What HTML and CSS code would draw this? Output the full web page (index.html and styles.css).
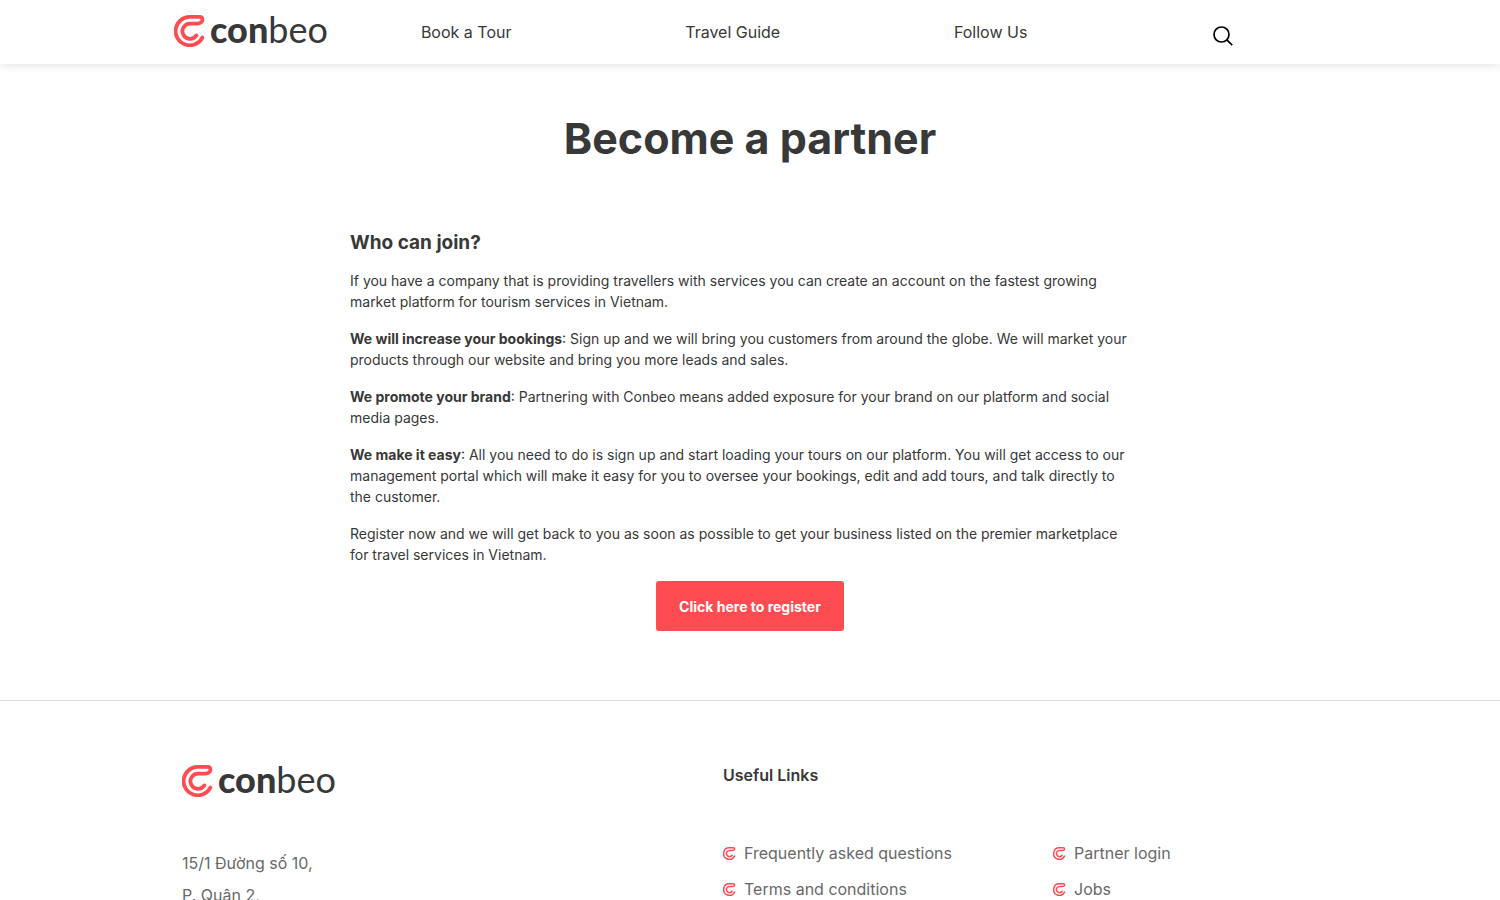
FILE: index.html
```html
<!DOCTYPE html>
<html lang="en">

<head>
    <meta charset="UTF-8">
    <meta name="viewport" content="width=device-width, initial-scale=1.0">
    <title>Become a partner - Conbeo</title>
    <link rel="stylesheet" href="styles.css">
</head>

<body>
    <!-- Logo mark shared by header, footer and link bullets -->
    <svg class="sprite" aria-hidden="true">
        <symbol id="mark" viewBox="0 0 32 32">
            <path d="M28.4 22.6A14.2 14.2 0 1 1 16 1.9H25.6C29.2 1.9 29 6 27 7.4C25.8 8.4 24.8 8.6 23.6 8.6H16.5A7.6 7.6 0 1 0 22.4 20.4" fill="none" stroke="#ff4b52" stroke-width="3.8" stroke-linecap="round" stroke-linejoin="round"/>
        </symbol>
    </svg>

    <header class="site-header">
        <div class="header-inner">
            <a href="#" class="logo">
                <svg class="logo-mark" aria-hidden="true"><use href="#mark"/></svg>
                <span class="logo-text"><b>con</b>beo</span>
            </a>
            <nav class="main-nav">
                <a href="#">Book a Tour</a>
                <a href="#">Travel Guide</a>
                <a href="#">Follow Us</a>
                <button type="button" class="search-btn" aria-label="Search">
                    <svg width="20" height="20" viewBox="0 0 20 20" fill="none" stroke="#000" stroke-width="1.7" aria-hidden="true">
                        <circle cx="8.5" cy="8.5" r="7.5"/>
                        <path d="M13.8 13.8L19.2 19.2"/>
                    </svg>
                </button>
            </nav>
        </div>
    </header>

    <main class="page">
        <h1>Become a partner</h1>
        <h2>Who can join?</h2>
        <p>If you have a company that is providing travellers with services you can create an account on the fastest growing market platform for tourism services in Vietnam.</p>
        <p><b>We will increase your bookings</b>: Sign up and we will bring you customers from around the globe. We will market your products through our website and bring you more leads and sales.</p>
        <p><b>We promote your brand</b>: Partnering with Conbeo means added exposure for your brand on our platform and social media pages.</p>
        <p><b>We make it easy</b>: All you need to do is sign up and start loading your tours on our platform. You will get access to our management portal which will make it easy for you to oversee your bookings, edit and add tours, and talk directly to the customer.</p>
        <p>Register now and we will get back to you as soon as possible to get your business listed on the premier marketplace for travel services in Vietnam.</p>
        <button type="button" class="register-btn">Click here to register</button>
    </main>

    <footer class="site-footer">
        <div class="footer-inner">
            <div class="footer-about">
                <a href="#" class="logo">
                    <svg class="logo-mark" aria-hidden="true"><use href="#mark"/></svg>
                    <span class="logo-text"><b>con</b>beo</span>
                </a>
                <address lang="vi">15/1 Đường số 10,<br>P. Quận 2,</address>
            </div>
            <div class="footer-links">
                <h3>Useful Links</h3>
                <ul>
                    <li><a href="#"><svg class="bullet" aria-hidden="true"><use href="#mark"/></svg>Frequently asked questions</a></li>
                    <li><a href="#"><svg class="bullet" aria-hidden="true"><use href="#mark"/></svg>Partner login</a></li>
                    <li><a href="#"><svg class="bullet" aria-hidden="true"><use href="#mark"/></svg>Terms and conditions</a></li>
                    <li><a href="#"><svg class="bullet" aria-hidden="true"><use href="#mark"/></svg>Jobs</a></li>
                </ul>
            </div>
        </div>
    </footer>
</body>

</html>
```
FILE: styles.css
```css
* {
    box-sizing: border-box;
}

body {
    margin: 0;
    font-family: Inter, sans-serif;
    font-size: 14px;
    line-height: 21px;
    color: #383838;
    background-color: #fff;
}

a {
    color: inherit;
    text-decoration: none;
}

.sprite {
    display: block;
    width: 0;
    height: 0;
}

/* Header */
.site-header {
    background-color: #fff;
    box-shadow: 0 0 10px rgba(0, 0, 0, 0.15);
}

.header-inner {
    display: flex;
    align-items: center;
    max-width: 1170px;
    height: 64px;
    margin: 0 auto;
    padding: 0 3px 0 9px;
}

.logo {
    display: flex;
    align-items: center;
    gap: 4px;
    height: 32px;
    color: #383838;
}

.header-inner .logo {
    width: 160px;
    margin-bottom: 2px;
}

.logo-mark {
    width: 32px;
    height: 32px;
}

.logo-text {
    padding-bottom: 4px;
    font-family: Lato, sans-serif;
    font-size: 36px;
    font-weight: 400;
    line-height: 32px;
}

.logo-text b {
    font-weight: 900;
}

.main-nav {
    flex: 1;
    display: flex;
    justify-content: space-around;
    align-items: center;
    font-size: 16px;
}

.search-btn {
    display: flex;
    padding: 8px 12px 0;
    border: none;
    background: none;
    cursor: pointer;
}

/* Content */
.page {
    max-width: 832px;
    margin: 0 auto;
    padding: 47px 16px 69px;
}

h1 {
    margin: 0 0 66px;
    font-size: 43px;
    font-weight: 700;
    line-height: 54px;
    text-align: center;
}

h2 {
    margin: 0 0 15px;
    font-size: 19px;
    font-weight: 700;
    line-height: 24px;
}

p {
    margin: 0 0 16px;
    padding-right: 14px;
}

.register-btn {
    display: block;
    margin: 0 auto;
    padding: 0 23px;
    height: 50px;
    border: none;
    border-radius: 3px;
    background-color: #ff4b52;
    color: #fff;
    font-family: inherit;
    font-size: 14px;
    font-weight: 700;
    cursor: pointer;
}

/* Footer */
.site-footer {
    border-top: 1px solid #ddd;
}

.footer-inner {
    display: grid;
    grid-template-columns: 541px 1fr;
    max-width: 1200px;
    margin: 0 auto;
    padding: 64px 32px 0;
    font-size: 16px;
    color: #696969;
}

address {
    margin-top: 50px;
    font-style: normal;
    line-height: 32px;
}

h3 {
    margin: 0 0 50px;
    font-size: 16px;
    font-weight: 600;
    line-height: 20px;
    color: #383838;
}

ul {
    display: grid;
    grid-template-columns: 330px 1fr;
    margin: 0;
    padding: 0;
    list-style: none;
}

li a {
    display: flex;
    align-items: center;
    gap: 8px;
    line-height: 36px;
}

.bullet {
    width: 13px;
    height: 13px;
}
```
